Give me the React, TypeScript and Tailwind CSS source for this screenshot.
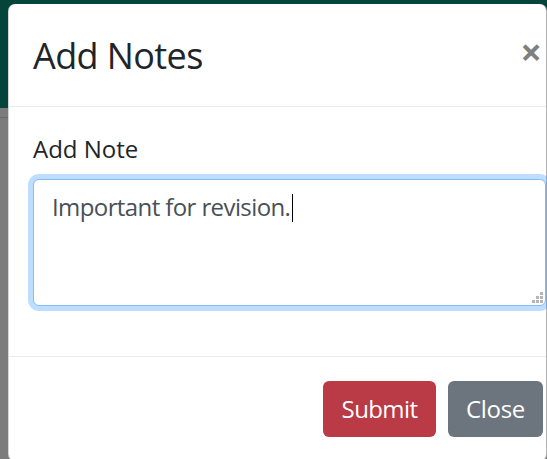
import React from "react";

const font = { fontFamily: '"Segoe UI", "Open Sans", "Noto Sans", sans-serif' };

function ResizeGrip() {
  // dotted resize corner of the note field
  const dots = [
    [2, 0],
    [1, 1],
    [2, 1],
    [0, 2],
    [1, 2],
    [2, 2],
  ];
  return (
    <svg width="11" height="11" viewBox="0 0 11 11" className="absolute right-[2px] bottom-[2px]">
      {dots.map(([c, r], i) => (
        <rect key={i} x={c * 4} y={r * 4} width="3" height="3" fill="#b5b5b5" />
      ))}
    </svg>
  );
}

export default function App() {
  return (
    <div className="relative w-[547px] h-[459px] overflow-hidden" style={font}>
      {/* page behind the dialog */}
      <div className="flex flex-col h-full">
        <div className="h-[108px] bg-[#04443a]" />
        <div className="h-[10px] bg-[#7c7c7c] border-b border-[#6a6a6a]" />
        <div className="flex-1 bg-[#7c7c7c]" />
      </div>

      {/* dialog */}
      <div className="absolute left-[8px] top-[4px] w-[539px] bg-white rounded-t-[7px] rounded-b-[7px] border-l border-[#2f2f2f]/20 border-r border-r-[#b4b4b4]">
        <div className="flex items-start justify-between pl-[24px] pr-[4px] pt-[25px] pb-[23px] border-b border-[#e9ecef]">
          <h4 className="text-[36px] leading-[54px] tracking-[-0.6px] text-[#212529] font-normal m-0">Add Notes</h4>
          <button className="text-[38px] leading-[44px] font-bold text-black/50 bg-transparent px-0">×</button>
        </div>

        <div className="pl-[24px] pr-0 pt-[24px] pb-[26px]">
          <label className="block text-[24px] leading-[36px] text-[#212529] mb-[12px]">Add Note</label>
          <div className="relative w-[513px] h-[127px] rounded-[6px] border border-[#80bdff] bg-white shadow-[0_0_0_5px_rgba(0,123,255,0.25)] px-[18px] py-[9px] mb-[24px]">
            <span className="text-[24px] leading-[36px] tracking-[-0.6px] text-[#495057]">Important for revision.</span>
            <span className="inline-block w-[1px] h-[28px] bg-black align-[-6px] ml-[2px]" />
            <ResizeGrip />
          </div>
        </div>

        <div className="flex justify-end gap-[12px] pl-[24px] pr-[3px] pt-[24px] pb-[24px] border-t border-[#e9ecef]">
          <button className="w-[113px] h-[56px] rounded-[6px] bg-[#ba3a46] text-white text-[24px] leading-[36px] tracking-[-0.6px]">Submit</button>
          <button className="w-[95px] h-[56px] rounded-[6px] bg-[#6c757d] text-white text-[24px] leading-[36px] tracking-[-0.3px]">Close</button>
        </div>
      </div>
    </div>
  );
}
